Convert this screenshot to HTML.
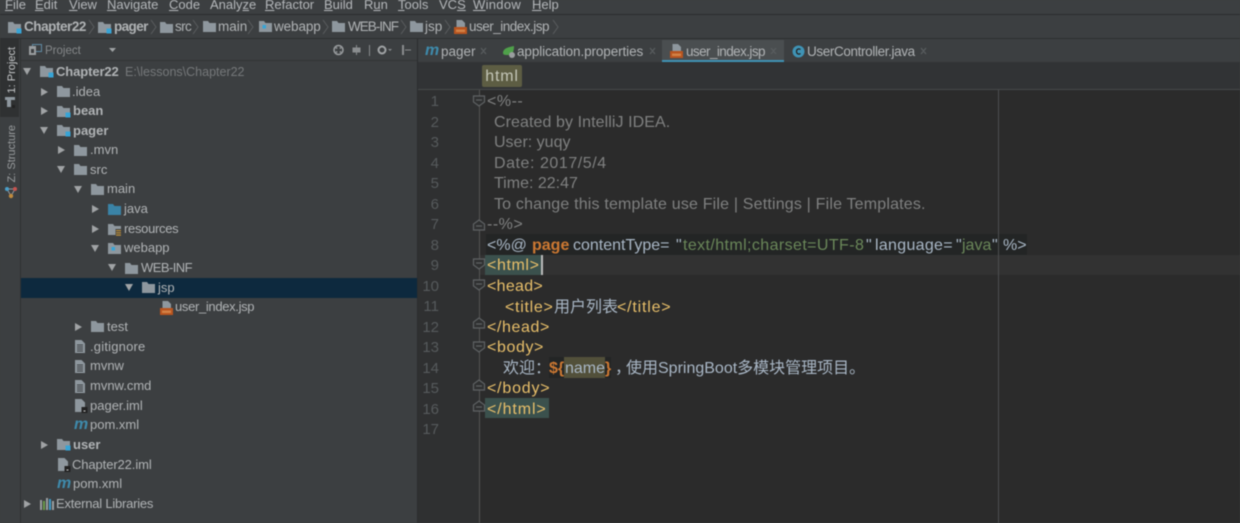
<!DOCTYPE html>
<html><head><meta charset="utf-8"><style>
*{margin:0;padding:0;box-sizing:border-box}
html,body{width:1240px;height:523px;overflow:hidden;background:#3c3f41}
#r{position:absolute;left:0;top:0;width:1240px;height:523px;overflow:hidden;background:#3c3f41;font-family:"Liberation Sans","Noto Sans CJK SC",sans-serif;filter:blur(.4px)}
.a,.t,.m,.b,.e,.n,.tab,.mi{position:absolute;white-space:pre}
.m{top:-3px;font-size:13px;line-height:15px;color:#b4b7ba}
.m u{text-decoration:underline}
.b{top:19px;font-size:13.5px;line-height:16px;color:#b0b3b5}
.t{font-size:13px;line-height:16px;color:#b0b3b5}
.tab{top:44px;font-size:13.5px;line-height:16px;color:#b0b3b5}
.e{font-size:16px;line-height:20px;color:#a9b7c6}
.n{left:418px;width:21px;text-align:right;font-size:15px;line-height:20px;color:#565a5c}
.mi{font-weight:bold;font-style:italic;font-size:16px;line-height:16px;color:#3e8aab}
.c{color:#7f8080}.y{color:#e8bf6a}.o{color:#cc7832;font-weight:bold}.g{color:#6a8759}.l{color:#a9b7c6}
svg{position:absolute;overflow:visible}
</style></head><body><div id="r">
<svg width="0" height="0" style="position:absolute"><defs>
<g id="f"><path d="M0 1h5l1.500 2H13v9H0z" fill="#8e979e"/></g>
<g id="fb"><path d="M0 1h5l1.500 2H13v9H0z" fill="#8e979e"/><rect x="8.500" y="7.500" width="5" height="5" fill="#37a4d6"/></g>
<g id="fw"><path d="M0 1h5l1.500 2H13v9H0z" fill="#8e979e"/><rect x="3.500" y="5" width="3.500" height="3.500" fill="#37a4d6"/></g>
<g id="fj"><path d="M0 1h5l1.500 2H13v9H0z" fill="#3a83a6"/></g>
<g id="fr"><path d="M0 1h5l1.500 2H13v9H0z" fill="#8e979e"/><rect x="7.500" y="6" width="6" height="7" fill="#3c3f41"/><path d="M8 7h5v1.300H8zM8 9.200h5v1.300H8zM8 11.400h5v1.300H8z" fill="#b58a3a"/></g>
<g id="jsp"><path d="M2.500 0H8l3 3v5H2.500z" fill="#8e979e"/><rect x="0" y="7" width="13" height="7" fill="#b8541f"/><rect x="2" y="9.500" width="9" height="2.500" fill="#e09a5a" opacity=".65"/></g>
<g id="tx"><path d="M0 0h6.500L10 3.500V13H0z" fill="#8e979e"/><path d="M2 5h6M2 7h6M2 9h6M2 11h6" stroke="#3c3f41" stroke-width="1"/></g>
<g id="iml"><path d="M0 0h6.500L10 3.500V13H0z" fill="#8e979e"/><rect x="6.500" y="8" width="6" height="6" fill="#222"/><rect x="8.500" y="11.500" width="2" height="1" fill="#ccc"/></g>
</defs></svg>

<!-- menu bar -->
<div class="a" style="left:0;top:14px;width:1240px;height:1px;background:#2b2d2e"></div>
<div class="m" style="left:5px"><u>F</u>ile</div><div class="m" style="left:35px"><u>E</u>dit</div><div class="m" style="left:69px"><u>V</u>iew</div><div class="m" style="left:107px"><u>N</u>avigate</div><div class="m" style="left:169px"><u>C</u>ode</div><div class="m" style="left:210px">Analy<u>z</u>e</div><div class="m" style="left:265px"><u>R</u>efactor</div><div class="m" style="left:324px"><u>B</u>uild</div><div class="m" style="left:364px">R<u>u</u>n</div><div class="m" style="left:398px"><u>T</u>ools</div><div class="m" style="left:439px">VC<u>S</u></div><div class="m" style="left:473px;letter-spacing:.3px"><u>W</u>indow</div><div class="m" style="left:532px"><u>H</u>elp</div>

<!-- breadcrumbs -->
<div class="a" style="left:0;top:38px;width:1240px;height:1px;background:#2d2f30"></div>
<svg style="left:8px;top:21px" width="14" height="14"><use href="#fb"/></svg>
<div class="b" style="left:24px;font-weight:bold;letter-spacing:-.45px">Chapter22</div>
<svg style="left:98px;top:21px" width="14" height="14"><use href="#fb"/></svg>
<div class="b" style="left:114px;font-weight:bold;letter-spacing:-.6px">pager</div>
<svg style="left:160px;top:21px" width="14" height="14"><use href="#f"/></svg>
<div class="b" style="left:175px;letter-spacing:-.6px">src</div>
<svg style="left:203px;top:20px" width="14" height="14"><use href="#f"/></svg>
<div class="b" style="left:218px">main</div>
<svg style="left:259px;top:20px" width="14" height="14"><use href="#fw"/></svg>
<div class="b" style="left:274px;letter-spacing:-.1px">webapp</div>
<svg style="left:332px;top:20px" width="14" height="14"><use href="#f"/></svg>
<div class="b" style="left:348px;letter-spacing:-1px">WEB-INF</div>
<svg style="left:410px;top:20px" width="14" height="14"><use href="#f"/></svg>
<div class="b" style="left:425px">jsp</div>
<svg style="left:454px;top:20px" width="14" height="14"><use href="#jsp"/></svg>
<div class="b" style="left:469px;letter-spacing:-.5px">user_index.jsp</div>
<svg style="left:0;top:0" width="1240" height="40"><g fill="none" stroke="#5a5d5f"><path d="M89 20l5 7-5 7M151 20l5 7-5 7M193 20l5 7-5 7M248 20l5 7-5 7M323 20l5 7-5 7M401 20l5 7-5 7M445 20l5 7-5 7M553 20l5 7-5 7"/></g></svg>

<!-- left strip -->
<div class="a" style="left:0;top:39px;width:20px;height:484px;background:#3c3f41"></div>
<div class="a" style="left:0;top:39px;width:19px;height:78px;background:#2f3132"></div>
<div class="a" style="left:20px;top:39px;width:1px;height:484px;background:#2f3132"></div>
<div class="a" style="left:5px;top:47px;font-size:11px;line-height:14px;color:#c4c6c8;writing-mode:vertical-rl;transform:rotate(180deg);white-space:pre">1: Project</div>
<svg style="left:5px;top:97px" width="12" height="12"><path d="M0 0h10v3H6v7H2V3H0z" fill="#8e979e" /><rect x="7" y="8" width="3" height="3" fill="#222"/></svg>
<div class="a" style="left:5px;top:125px;font-size:11px;line-height:14px;color:#9a9d9f;writing-mode:vertical-rl;transform:rotate(180deg);white-space:pre">Z: Structure</div>
<svg style="left:4px;top:186px" width="14" height="14"><path d="M3 3L7 10L11 3M3 3H11" stroke="#8e979e" fill="none"/><circle cx="3" cy="3" r="2" fill="#4a9fc9"/><circle cx="11" cy="3" r="2" fill="#c75450"/><circle cx="7" cy="10" r="2.200" fill="#c08a3e"/></svg>

<!-- project header -->
<div class="a" style="left:21px;top:60px;width:396px;height:1px;background:#323435"></div>
<svg style="left:29px;top:44px" width="14" height="12"><rect x="3.500" y="0.500" width="9" height="7" fill="none" stroke="#5f8aa3"/><rect x="0" y="2" width="7" height="9" fill="#9a9d9f"/><rect x="2" y="5" width="3" height="4" fill="#3c3f41"/></svg>
<div class="t" style="left:45px;top:43px;font-size:11.500px;color:#85888a">Project</div>
<svg style="left:109px;top:48px" width="8" height="5"><path d="M0 0h7L3.500 4z" fill="#a0a3a5"/></svg>
<svg style="left:333px;top:44px" width="84" height="12" fill="#8a8d8f"><circle cx="5.500" cy="6" r="4.500" fill="none" stroke="#9a9d9f" stroke-width="1.500"/><circle cx="3.500" cy="4" r="1"/><circle cx="7.500" cy="4" r="1"/><circle cx="3.500" cy="8" r="1"/><circle cx="7.500" cy="8" r="1"/><path d="M23.500 1v10M20 4h7v4h-7z" stroke="#8a8d8f"/><rect x="36" y="1" width="1" height="11"/><circle cx="49" cy="6" r="3.500" fill="none" stroke="#a0a3a5" stroke-width="2"/><path d="M55 5h4l-2 2z"/><rect x="69" y="1" width="2" height="10"/><path d="M72 6h6" stroke="#8a8d8f"/></svg>

<!-- tree selection -->
<div class="a" style="left:21px;top:278px;width:396px;height:19.500px;background:#0d293e"></div>

<svg style="left:0;top:0" width="420" height="523" fill="#a0a3a5">
<path d="M23 68h8l-4 7z"/><path d="M41 88l7 4-7 4zM41 107l7 4-7 4z"/><path d="M40 127h8l-4 7z"/>
<path d="M58 146l7 4-7 4z"/><path d="M57 166h8l-4 7z"/><path d="M74 186h8l-4 7z"/>
<path d="M92 205l7 4-7 4zM92 225l7 4-7 4z"/><path d="M91 245h8l-4 7z"/><path d="M108 264h8l-4 7z"/><path d="M125 284h8l-4 7z"/>
<path d="M75 323l7 4-7 4z"/><path d="M41 441l7 4-7 4z"/><path d="M24 500l7 4-7 4z"/>
</svg>
<svg style="left:40px;top:65px" width="14" height="14"><use href="#fb"/></svg>
<svg style="left:57px;top:85px" width="14" height="14"><use href="#f"/></svg>
<svg style="left:57px;top:105px" width="14" height="14"><use href="#fb"/></svg>
<svg style="left:57px;top:124px" width="14" height="14"><use href="#fb"/></svg>
<svg style="left:74px;top:144px" width="14" height="14"><use href="#f"/></svg>
<svg style="left:74px;top:163px" width="14" height="14"><use href="#f"/></svg>
<svg style="left:91px;top:183px" width="14" height="14"><use href="#f"/></svg>
<svg style="left:108px;top:203px" width="14" height="14"><use href="#fj"/></svg>
<svg style="left:108px;top:223px" width="14" height="14"><use href="#fr"/></svg>
<svg style="left:108px;top:242px" width="14" height="14"><use href="#fw"/></svg>
<svg style="left:125px;top:262px" width="14" height="14"><use href="#f"/></svg>
<svg style="left:142px;top:281px" width="14" height="14"><use href="#f"/></svg>
<svg style="left:160px;top:301px" width="14" height="14"><use href="#jsp"/></svg>
<svg style="left:91px;top:320px" width="14" height="14"><use href="#f"/></svg>
<svg style="left:75px;top:340px" width="14" height="14"><use href="#tx"/></svg>
<svg style="left:75px;top:360px" width="14" height="14"><use href="#tx"/></svg>
<svg style="left:75px;top:380px" width="14" height="14"><use href="#tx"/></svg>
<svg style="left:75px;top:399px" width="14" height="14"><use href="#iml"/></svg>
<div class="mi" style="left:74px;top:417px">m</div>
<svg style="left:57px;top:438px" width="14" height="14"><use href="#fb"/></svg>
<svg style="left:58px;top:458px" width="14" height="14"><use href="#iml"/></svg>
<div class="mi" style="left:57px;top:476px">m</div>
<svg style="left:40px;top:498px" width="14" height="13"><path d="M1 2v10M4 3v9M7 0v12M10 1v11M13 3v9" stroke-width="2" fill="none" stroke="#9a9d9f"/><path d="M4 3v9" stroke="#6a9a4a" stroke-width="2"/><path d="M10 1v11" stroke="#3e9ac6" stroke-width="2"/></svg>

<div class="t" style="left:56px;top:64px;font-weight:bold;letter-spacing:-.1px">Chapter22</div><div class="t" style="left:125px;top:64px;font-size:12.500px;color:#75787a">E:\lessons\Chapter22</div>
<div class="t" style="left:72px;top:84px">.idea</div>
<div class="t" style="left:73px;top:103px;font-weight:bold">bean</div>
<div class="t" style="left:73px;top:123px;font-weight:bold">pager</div>
<div class="t" style="left:90px;top:142px">.mvn</div>
<div class="t" style="left:90px;top:162px">src</div>
<div class="t" style="left:107px;top:181px">main</div>
<div class="t" style="left:124px;top:201px">java</div>
<div class="t" style="left:124px;top:221px;letter-spacing:-.3px">resources</div>
<div class="t" style="left:124px;top:240px">webapp</div>
<div class="t" style="left:141px;top:260px;letter-spacing:-.55px">WEB-INF</div>
<div class="t" style="left:158px;top:280px">jsp</div>
<div class="t" style="left:175px;top:299px;letter-spacing:-.33px">user_index.jsp</div>
<div class="t" style="left:107px;top:319px">test</div>
<div class="t" style="left:90px;top:339px;letter-spacing:.2px">.gitignore</div>
<div class="t" style="left:90px;top:358px">mvnw</div>
<div class="t" style="left:90px;top:378px">mvnw.cmd</div>
<div class="t" style="left:90px;top:398px">pager.iml</div>
<div class="t" style="left:90px;top:417px">pom.xml</div>
<div class="t" style="left:73px;top:437px;font-weight:bold">user</div>
<div class="t" style="left:72px;top:457px;letter-spacing:-.1px">Chapter22.iml</div>
<div class="t" style="left:73px;top:476px">pom.xml</div>
<div class="t" style="left:56px;top:496px;letter-spacing:-.22px">External Libraries</div>

<!-- divider -->
<div class="a" style="left:417px;top:39px;width:1px;height:484px;background:#2b2d2e"></div>

<!-- tabs -->
<div class="a" style="left:418px;top:62px;width:822px;height:28px;background:#313335"></div>
<div class="a" style="left:662px;top:40px;width:122px;height:20px;background:#4a4e50"></div>
<div class="a" style="left:662px;top:60px;width:122px;height:2px;background:#3f93b5"></div>
<div class="mi" style="left:425px;top:43px">m</div>
<div class="tab" style="left:441px">pager</div>
<svg style="left:502px;top:45px" width="14" height="14"><path d="M1 8C1 3 7 2 12 1C12 6 11 10 6 10C3 10 1 10 1 8z" fill="#4fa04a"/><circle cx="10" cy="10" r="3" fill="#9a9d9f"/></svg>
<div class="tab" style="left:517px;letter-spacing:-.1px">application.properties</div>
<svg style="left:670px;top:44px" width="14" height="14"><use href="#jsp"/></svg>
<div class="tab" style="left:686px;letter-spacing:-.58px">user_index.jsp</div>
<svg style="left:792px;top:45px" width="13" height="13"><circle cx="6.500" cy="6.500" r="6" fill="#3f93b5"/><path d="M8.500 4.500C6.500 3 4.500 4.500 4.500 6.500S6.500 10 8.500 8.500" fill="none" stroke="#222" stroke-width="1.200"/></svg>
<div class="tab" style="left:807px;letter-spacing:-.37px">UserController.java</div>
<svg style="left:0;top:0" width="1240" height="60" fill="none" stroke="#5a5e60" stroke-width="1.200"><path d="M481 48l5 6m0-6l-5 6M650 48l5 6m0-6l-5 6M771 48l5 6m0-6l-5 6M921 48l5 6m0-6l-5 6"/></svg>

<!-- html chip -->
<div class="a" style="left:482px;top:65px;width:40px;height:22px;background:#5d5d43;border-radius:2px;text-align:center;font-size:16px;line-height:23px;letter-spacing:.8px;color:#c4c6b8">html</div>
<div class="a" style="left:418px;top:89px;width:822px;height:1px;background:#46494a"></div>

<!-- editor -->
<div class="a" style="left:418px;top:90px;width:61px;height:433px;background:#2f3031"></div>
<div class="a" style="left:479px;top:90px;width:761px;height:433px;background:#2b2b2b"></div>
<div class="a" style="left:479px;top:90px;width:1px;height:433px;background:#555"></div>
<div class="a" style="left:486px;top:234px;width:541px;height:21px;background:#232525"></div>
<div class="a" style="left:480px;top:255px;width:760px;height:20px;background:#323232"></div>
<div class="a" style="left:485px;top:255px;width:56px;height:20px;background:#3b514d"></div>
<div class="a" style="left:485px;top:398px;width:64px;height:20px;background:#3b514d"></div>
<div class="a" style="left:549px;top:357px;width:62px;height:21px;background:#232525"></div>
<div class="a" style="left:564px;top:357px;width:41px;height:21px;background:#52503a"></div>
<div class="a" style="left:541px;top:255px;width:1.500px;height:20px;background:#bbb"></div>
<div class="a" style="left:998px;top:90px;width:1px;height:433px;background:#4c4e50"></div>

<svg style="left:472px;top:90px" width="16" height="340" fill="#2f3031" stroke="#5f6264" stroke-width="1.200">
<path d="M1.500 6h11v6l-5.500 4-5.500-4zM4 10h6"/>
<path d="M7 130l5.500 4v6H1.500v-6zM4 136h6"/>
<path d="M1.500 169h11v6l-5.500 4-5.500-4zM4 173h6"/>
<path d="M1.500 190h11v6l-5.500 4-5.500-4zM4 194h6"/>
<path d="M7 228l5.500 4v6H1.500v-6zM4 234h6"/>
<path d="M1.500 252h11v6l-5.500 4-5.500-4zM4 256h6"/>
<path d="M7 290l5.500 4v6H1.500v-6zM4 296h6"/>
<path d="M7 311l5.500 4v6H1.500v-6zM4 317h6"/>
</svg>

<div class="n" style="top:92px">1</div><div class="n" style="top:113px">2</div><div class="n" style="top:133px">3</div><div class="n" style="top:154px">4</div><div class="n" style="top:174px">5</div><div class="n" style="top:195px">6</div><div class="n" style="top:215px">7</div><div class="n" style="top:236px">8</div><div class="n" style="top:256px">9</div><div class="n" style="top:277px">10</div><div class="n" style="top:297px">11</div><div class="n" style="top:318px">12</div><div class="n" style="top:338px">13</div><div class="n" style="top:359px">14</div><div class="n" style="top:379px">15</div><div class="n" style="top:400px">16</div><div class="n" style="top:420px">17</div>

<div class="e c" style="left:487px;top:92px;letter-spacing:.5px">&lt;%--</div>
<div class="e c" style="left:494px;top:113px;letter-spacing:.08px">Created by IntelliJ IDEA.</div>
<div class="e c" style="left:494px;top:133px">User: yuqy</div>
<div class="e c" style="left:494px;top:154px;letter-spacing:.55px">Date: 2017/5/4</div>
<div class="e c" style="left:494px;top:174px">Time: 22:47</div>
<div class="e c" style="left:494px;top:195px;letter-spacing:.18px">To change this template use File | Settings | File Templates.</div>
<div class="e c" style="left:487px;top:215px;letter-spacing:.5px">--%&gt;</div>

<div class="e" style="left:487px;top:236px">&lt;%@</div>
<div class="e o" style="left:532px;top:236px">page</div>
<div class="e" style="left:573px;top:236px">contentType=</div>
<div class="e" style="left:676px;top:236px">"</div>
<div class="e g" style="left:683px;top:236px;letter-spacing:.4px">text/html;charset=UTF-8</div>
<div class="e" style="left:866px;top:236px">"</div>
<div class="e" style="left:875px;top:236px;letter-spacing:.3px">language=</div>
<div class="e" style="left:956px;top:236px">"</div>
<div class="e g" style="left:962px;top:236px">java</div>
<div class="e" style="left:992px;top:236px">"</div>
<div class="e" style="left:1003px;top:236px">%&gt;</div>

<div class="e y" style="left:487px;top:256px;letter-spacing:.6px">&lt;html&gt;</div>
<div class="e y" style="left:487px;top:277px;letter-spacing:.3px">&lt;head&gt;</div>
<div class="e y" style="left:505px;top:298px;letter-spacing:.7px">&lt;title&gt;</div>
<div class="e" style="left:554px;top:298px">用户列表</div>
<div class="e y" style="left:617px;top:298px;letter-spacing:.8px">&lt;/title&gt;</div>
<div class="e y" style="left:487px;top:318px;letter-spacing:.6px">&lt;/head&gt;</div>
<div class="e y" style="left:487px;top:338px;letter-spacing:.6px">&lt;body&gt;</div>
<div class="e" style="left:503px;top:359px">欢迎：</div>
<div class="e o" style="left:549px;top:359px">${</div>
<div class="e" style="left:565px;top:359px">name</div>
<div class="e o" style="left:605px;top:359px">}</div>
<div class="e" style="left:615px;top:359px">，</div>
<div class="e" style="left:626px;top:359px">使用SpringBoot多模块管理项目。</div>
<div class="e y" style="left:487px;top:379px;letter-spacing:.8px">&lt;/body&gt;</div>
<div class="e y" style="left:487px;top:400px;letter-spacing:.9px">&lt;/html&gt;</div>
</div></body></html>
